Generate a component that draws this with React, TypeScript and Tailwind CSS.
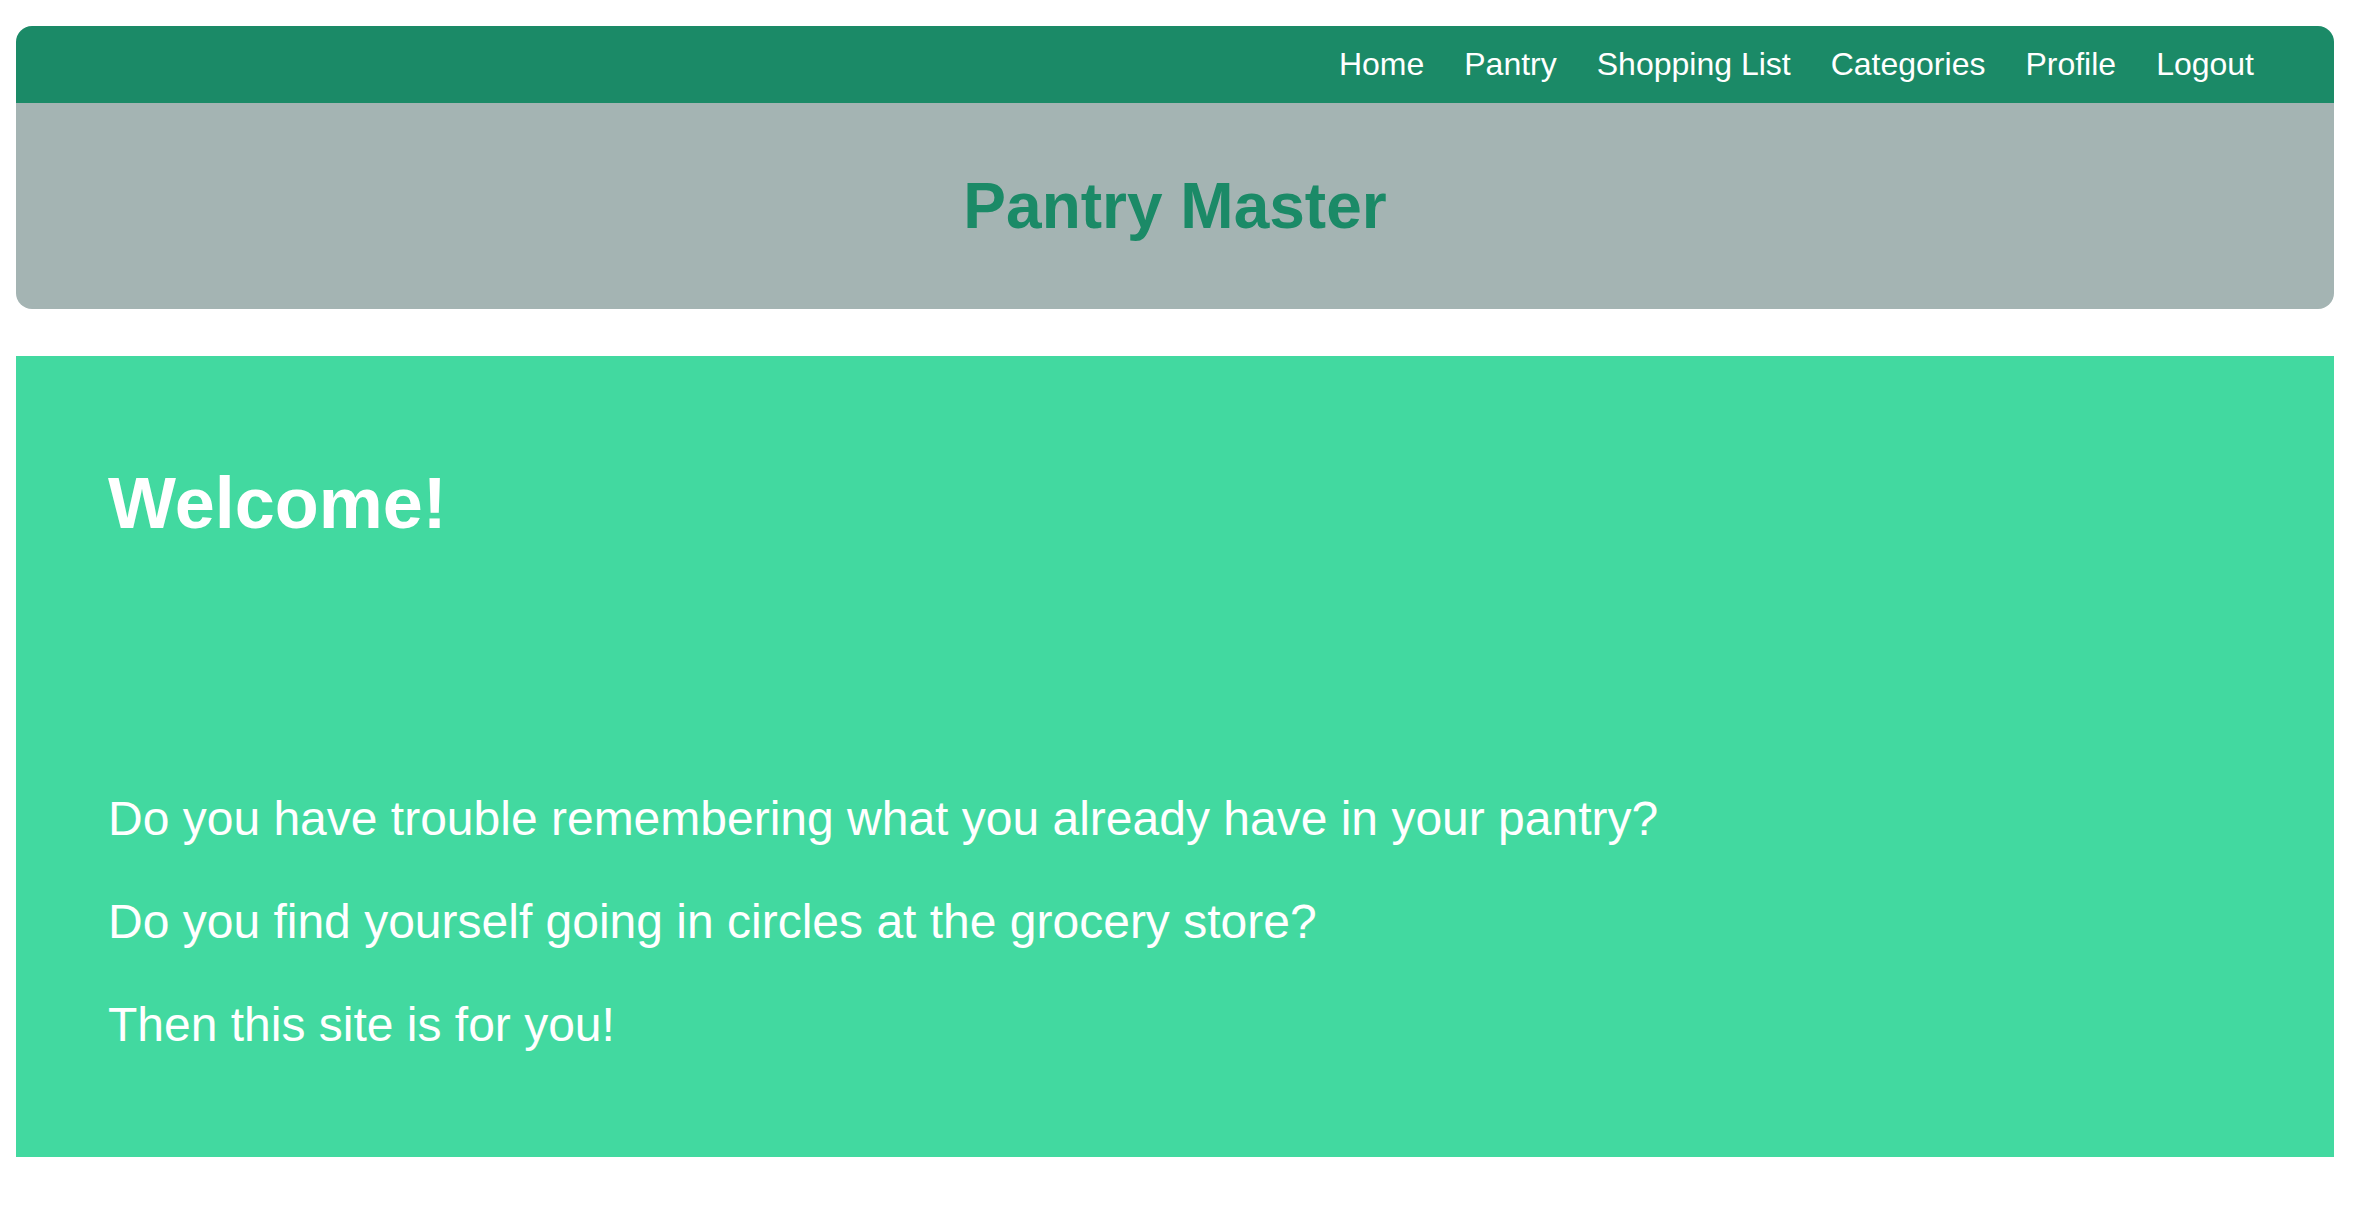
export default function App() {
  const links = ["Home", "Pantry", "Shopping List", "Categories", "Profile", "Logout"];

  return (
    <div className="min-h-screen bg-white pl-4 pr-[30px] pt-[26px] font-['Liberation_Sans',Arial,sans-serif]">
      {/* Header */}
      <header className="rounded-2xl overflow-hidden">
        <nav className="h-[77px] bg-[#1b8a67] flex items-center justify-end gap-[40px] pr-[80px]">
          {links.map((l) => (
            <a key={l} href="#" className="text-white text-[32px] leading-[37px]">
              {l}
            </a>
          ))}
        </nav>
        <div className="h-[206px] bg-[#a4b4b3] flex items-center justify-center">
          <h1 className="text-[#1b8a67] text-[64px] leading-[74px] font-bold">Pantry Master</h1>
        </div>
      </header>

      {/* Welcome section */}
      <main className="mt-[47px] bg-[#42d9a0] pl-[92px] pt-[106px] pb-[105px] text-white">
        <h2 className="text-[72px] leading-[83px] font-bold">Welcome!</h2>
        <div className="mt-[246px] flex flex-col gap-[48px] text-[48px] leading-[55px]">
          <p>Do you have trouble remembering what you already have in your pantry?</p>
          <p>Do you find yourself going in circles at the grocery store?</p>
          <p>Then this site is for you!</p>
        </div>
      </main>
    </div>
  );
}
